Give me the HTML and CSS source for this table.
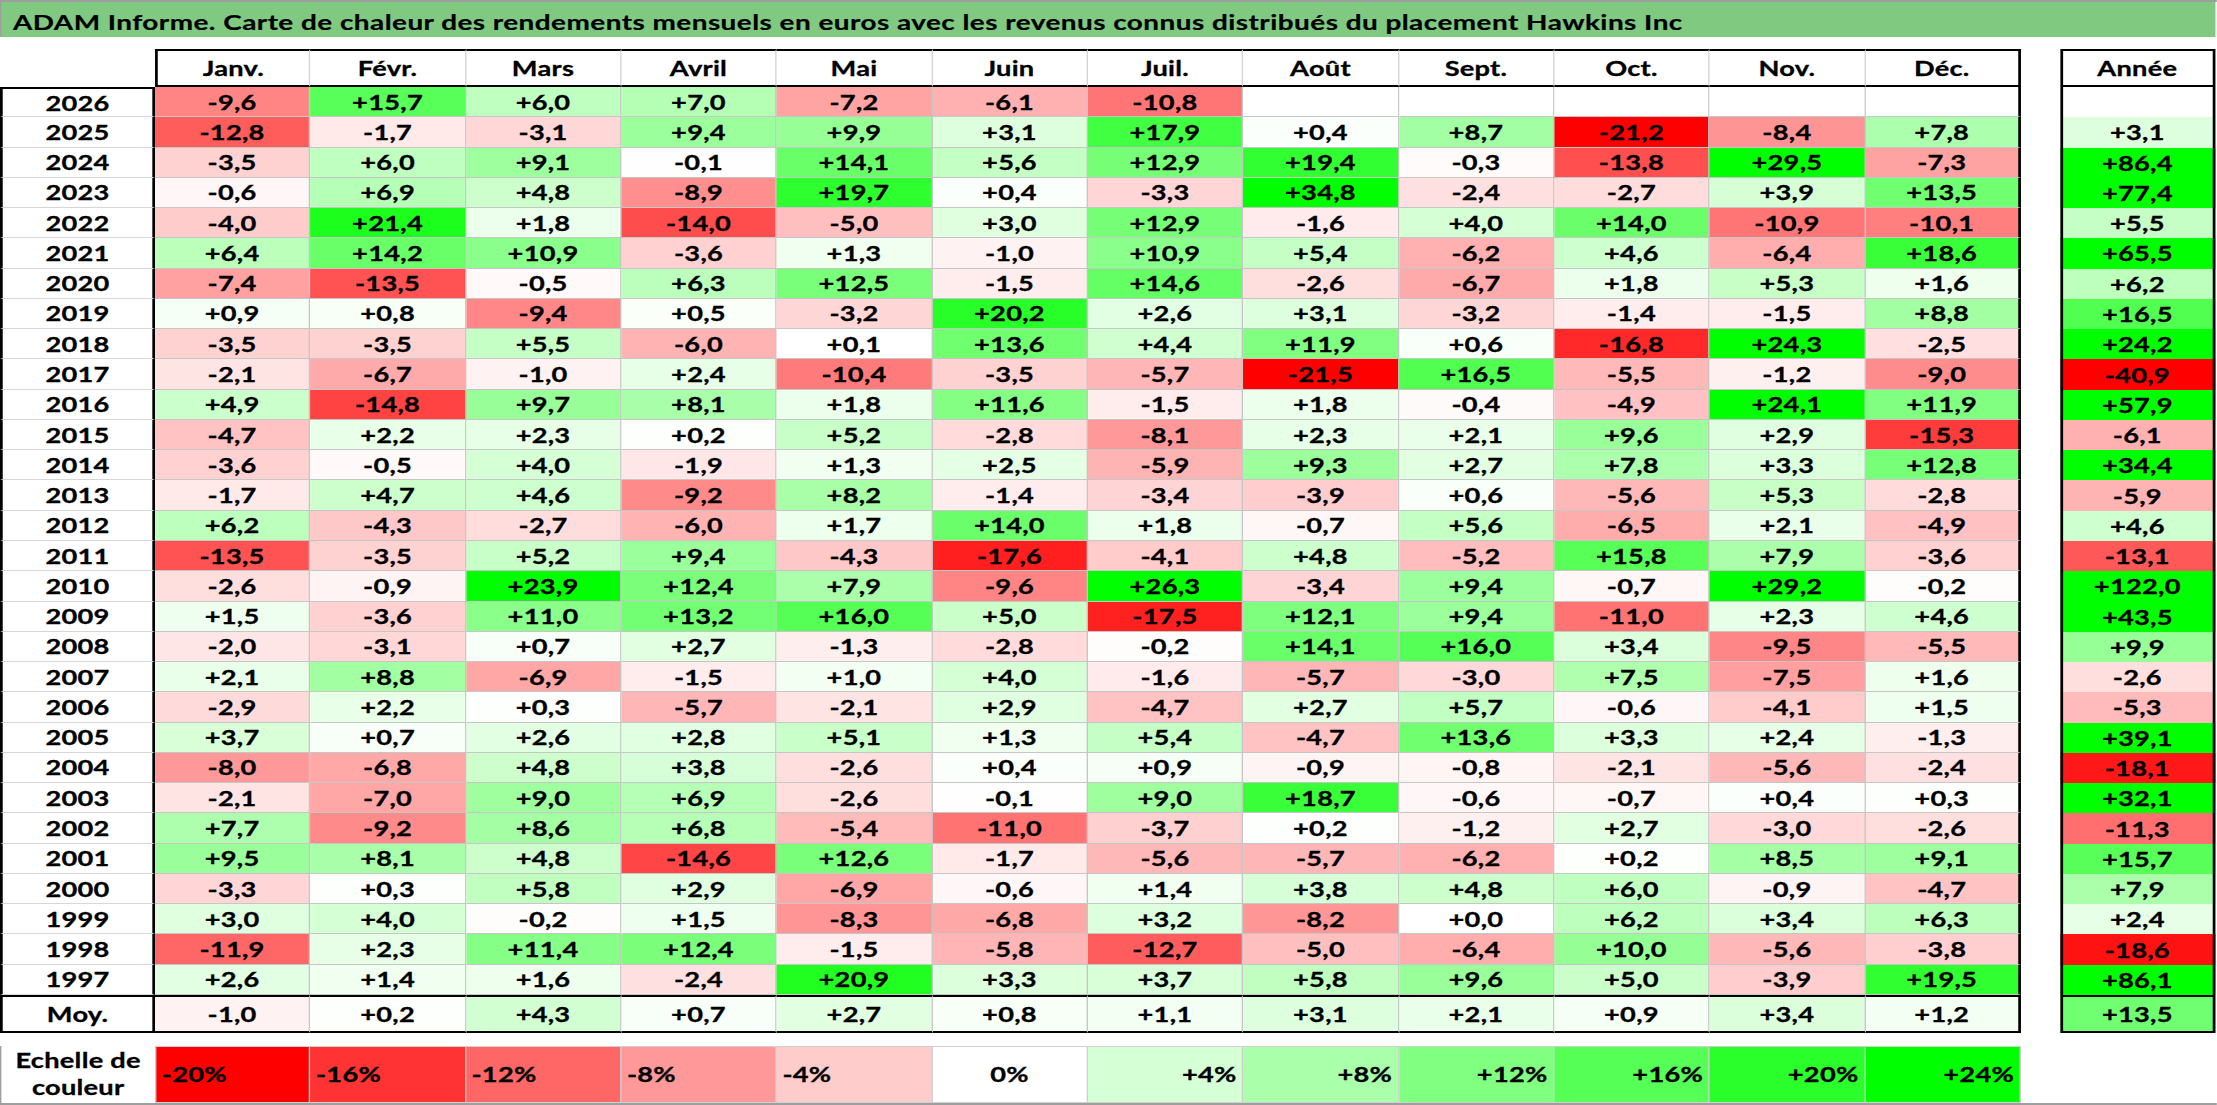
FILE: index.html
```html
<!DOCTYPE html>
<html lang="fr">
<head>
<meta charset="utf-8">
<title>ADAM Informe - Carte de chaleur Hawkins Inc</title>
<link rel="stylesheet" href="styles.css">
</head>
<body>
<div class="frame">
  <div class="title">ADAM Informe. Carte de chaleur des rendements mensuels en euros avec les revenus connus distribués du placement Hawkins Inc</div>
  <div class="board">
    <div class="grid">
      <div class="corner"></div>
      <div class="mh">Janv.</div><div class="mh">Févr.</div><div class="mh">Mars</div><div class="mh">Avril</div><div class="mh">Mai</div><div class="mh">Juin</div><div class="mh">Juil.</div><div class="mh">Août</div><div class="mh">Sept.</div><div class="mh">Oct.</div><div class="mh">Nov.</div><div class="mh">Déc.</div>

      <div class="yr first">2026</div><div class="c" style="--v:-9.6">-9,6</div><div class="c" style="--v:15.7">+15,7</div><div class="c" style="--v:6.0">+6,0</div><div class="c" style="--v:7.0">+7,0</div><div class="c" style="--v:-7.2">-7,2</div><div class="c" style="--v:-6.1">-6,1</div><div class="c" style="--v:-10.8">-10,8</div><div class="c e"></div><div class="c e"></div><div class="c e"></div><div class="c e"></div><div class="c e"></div>
      <div class="yr">2025</div><div class="c" style="--v:-12.8">-12,8</div><div class="c" style="--v:-1.7">-1,7</div><div class="c" style="--v:-3.1">-3,1</div><div class="c" style="--v:9.4">+9,4</div><div class="c" style="--v:9.9">+9,9</div><div class="c" style="--v:3.1">+3,1</div><div class="c" style="--v:17.9">+17,9</div><div class="c" style="--v:0.4">+0,4</div><div class="c" style="--v:8.7">+8,7</div><div class="c" style="--v:-21.2">-21,2</div><div class="c" style="--v:-8.4">-8,4</div><div class="c" style="--v:7.8">+7,8</div>
      <div class="yr">2024</div><div class="c" style="--v:-3.5">-3,5</div><div class="c" style="--v:6.0">+6,0</div><div class="c" style="--v:9.1">+9,1</div><div class="c" style="--v:-0.1">-0,1</div><div class="c" style="--v:14.1">+14,1</div><div class="c" style="--v:5.6">+5,6</div><div class="c" style="--v:12.9">+12,9</div><div class="c" style="--v:19.4">+19,4</div><div class="c" style="--v:-0.3">-0,3</div><div class="c" style="--v:-13.8">-13,8</div><div class="c" style="--v:29.5">+29,5</div><div class="c" style="--v:-7.3">-7,3</div>
      <div class="yr">2023</div><div class="c" style="--v:-0.6">-0,6</div><div class="c" style="--v:6.9">+6,9</div><div class="c" style="--v:4.8">+4,8</div><div class="c" style="--v:-8.9">-8,9</div><div class="c" style="--v:19.7">+19,7</div><div class="c" style="--v:0.4">+0,4</div><div class="c" style="--v:-3.3">-3,3</div><div class="c" style="--v:34.8">+34,8</div><div class="c" style="--v:-2.4">-2,4</div><div class="c" style="--v:-2.7">-2,7</div><div class="c" style="--v:3.9">+3,9</div><div class="c" style="--v:13.5">+13,5</div>
      <div class="yr">2022</div><div class="c" style="--v:-4.0">-4,0</div><div class="c" style="--v:21.4">+21,4</div><div class="c" style="--v:1.8">+1,8</div><div class="c" style="--v:-14.0">-14,0</div><div class="c" style="--v:-5.0">-5,0</div><div class="c" style="--v:3.0">+3,0</div><div class="c" style="--v:12.9">+12,9</div><div class="c" style="--v:-1.6">-1,6</div><div class="c" style="--v:4.0">+4,0</div><div class="c" style="--v:14.0">+14,0</div><div class="c" style="--v:-10.9">-10,9</div><div class="c" style="--v:-10.1">-10,1</div>
      <div class="yr">2021</div><div class="c" style="--v:6.4">+6,4</div><div class="c" style="--v:14.2">+14,2</div><div class="c" style="--v:10.9">+10,9</div><div class="c" style="--v:-3.6">-3,6</div><div class="c" style="--v:1.3">+1,3</div><div class="c" style="--v:-1.0">-1,0</div><div class="c" style="--v:10.9">+10,9</div><div class="c" style="--v:5.4">+5,4</div><div class="c" style="--v:-6.2">-6,2</div><div class="c" style="--v:4.6">+4,6</div><div class="c" style="--v:-6.4">-6,4</div><div class="c" style="--v:18.6">+18,6</div>
      <div class="yr">2020</div><div class="c" style="--v:-7.4">-7,4</div><div class="c" style="--v:-13.5">-13,5</div><div class="c" style="--v:-0.5">-0,5</div><div class="c" style="--v:6.3">+6,3</div><div class="c" style="--v:12.5">+12,5</div><div class="c" style="--v:-1.5">-1,5</div><div class="c" style="--v:14.6">+14,6</div><div class="c" style="--v:-2.6">-2,6</div><div class="c" style="--v:-6.7">-6,7</div><div class="c" style="--v:1.8">+1,8</div><div class="c" style="--v:5.3">+5,3</div><div class="c" style="--v:1.6">+1,6</div>
      <div class="yr">2019</div><div class="c" style="--v:0.9">+0,9</div><div class="c" style="--v:0.8">+0,8</div><div class="c" style="--v:-9.4">-9,4</div><div class="c" style="--v:0.5">+0,5</div><div class="c" style="--v:-3.2">-3,2</div><div class="c" style="--v:20.2">+20,2</div><div class="c" style="--v:2.6">+2,6</div><div class="c" style="--v:3.1">+3,1</div><div class="c" style="--v:-3.2">-3,2</div><div class="c" style="--v:-1.4">-1,4</div><div class="c" style="--v:-1.5">-1,5</div><div class="c" style="--v:8.8">+8,8</div>
      <div class="yr">2018</div><div class="c" style="--v:-3.5">-3,5</div><div class="c" style="--v:-3.5">-3,5</div><div class="c" style="--v:5.5">+5,5</div><div class="c" style="--v:-6.0">-6,0</div><div class="c" style="--v:0.1">+0,1</div><div class="c" style="--v:13.6">+13,6</div><div class="c" style="--v:4.4">+4,4</div><div class="c" style="--v:11.9">+11,9</div><div class="c" style="--v:0.6">+0,6</div><div class="c" style="--v:-16.8">-16,8</div><div class="c" style="--v:24.3">+24,3</div><div class="c" style="--v:-2.5">-2,5</div>
      <div class="yr">2017</div><div class="c" style="--v:-2.1">-2,1</div><div class="c" style="--v:-6.7">-6,7</div><div class="c" style="--v:-1.0">-1,0</div><div class="c" style="--v:2.4">+2,4</div><div class="c" style="--v:-10.4">-10,4</div><div class="c" style="--v:-3.5">-3,5</div><div class="c" style="--v:-5.7">-5,7</div><div class="c" style="--v:-21.5">-21,5</div><div class="c" style="--v:16.5">+16,5</div><div class="c" style="--v:-5.5">-5,5</div><div class="c" style="--v:-1.2">-1,2</div><div class="c" style="--v:-9.0">-9,0</div>
      <div class="yr">2016</div><div class="c" style="--v:4.9">+4,9</div><div class="c" style="--v:-14.8">-14,8</div><div class="c" style="--v:9.7">+9,7</div><div class="c" style="--v:8.1">+8,1</div><div class="c" style="--v:1.8">+1,8</div><div class="c" style="--v:11.6">+11,6</div><div class="c" style="--v:-1.5">-1,5</div><div class="c" style="--v:1.8">+1,8</div><div class="c" style="--v:-0.4">-0,4</div><div class="c" style="--v:-4.9">-4,9</div><div class="c" style="--v:24.1">+24,1</div><div class="c" style="--v:11.9">+11,9</div>
      <div class="yr">2015</div><div class="c" style="--v:-4.7">-4,7</div><div class="c" style="--v:2.2">+2,2</div><div class="c" style="--v:2.3">+2,3</div><div class="c" style="--v:0.2">+0,2</div><div class="c" style="--v:5.2">+5,2</div><div class="c" style="--v:-2.8">-2,8</div><div class="c" style="--v:-8.1">-8,1</div><div class="c" style="--v:2.3">+2,3</div><div class="c" style="--v:2.1">+2,1</div><div class="c" style="--v:9.6">+9,6</div><div class="c" style="--v:2.9">+2,9</div><div class="c" style="--v:-15.3">-15,3</div>
      <div class="yr">2014</div><div class="c" style="--v:-3.6">-3,6</div><div class="c" style="--v:-0.5">-0,5</div><div class="c" style="--v:4.0">+4,0</div><div class="c" style="--v:-1.9">-1,9</div><div class="c" style="--v:1.3">+1,3</div><div class="c" style="--v:2.5">+2,5</div><div class="c" style="--v:-5.9">-5,9</div><div class="c" style="--v:9.3">+9,3</div><div class="c" style="--v:2.7">+2,7</div><div class="c" style="--v:7.8">+7,8</div><div class="c" style="--v:3.3">+3,3</div><div class="c" style="--v:12.8">+12,8</div>
      <div class="yr">2013</div><div class="c" style="--v:-1.7">-1,7</div><div class="c" style="--v:4.7">+4,7</div><div class="c" style="--v:4.6">+4,6</div><div class="c" style="--v:-9.2">-9,2</div><div class="c" style="--v:8.2">+8,2</div><div class="c" style="--v:-1.4">-1,4</div><div class="c" style="--v:-3.4">-3,4</div><div class="c" style="--v:-3.9">-3,9</div><div class="c" style="--v:0.6">+0,6</div><div class="c" style="--v:-5.6">-5,6</div><div class="c" style="--v:5.3">+5,3</div><div class="c" style="--v:-2.8">-2,8</div>
      <div class="yr">2012</div><div class="c" style="--v:6.2">+6,2</div><div class="c" style="--v:-4.3">-4,3</div><div class="c" style="--v:-2.7">-2,7</div><div class="c" style="--v:-6.0">-6,0</div><div class="c" style="--v:1.7">+1,7</div><div class="c" style="--v:14.0">+14,0</div><div class="c" style="--v:1.8">+1,8</div><div class="c" style="--v:-0.7">-0,7</div><div class="c" style="--v:5.6">+5,6</div><div class="c" style="--v:-6.5">-6,5</div><div class="c" style="--v:2.1">+2,1</div><div class="c" style="--v:-4.9">-4,9</div>
      <div class="yr">2011</div><div class="c" style="--v:-13.5">-13,5</div><div class="c" style="--v:-3.5">-3,5</div><div class="c" style="--v:5.2">+5,2</div><div class="c" style="--v:9.4">+9,4</div><div class="c" style="--v:-4.3">-4,3</div><div class="c" style="--v:-17.6">-17,6</div><div class="c" style="--v:-4.1">-4,1</div><div class="c" style="--v:4.8">+4,8</div><div class="c" style="--v:-5.2">-5,2</div><div class="c" style="--v:15.8">+15,8</div><div class="c" style="--v:7.9">+7,9</div><div class="c" style="--v:-3.6">-3,6</div>
      <div class="yr">2010</div><div class="c" style="--v:-2.6">-2,6</div><div class="c" style="--v:-0.9">-0,9</div><div class="c" style="--v:23.9">+23,9</div><div class="c" style="--v:12.4">+12,4</div><div class="c" style="--v:7.9">+7,9</div><div class="c" style="--v:-9.6">-9,6</div><div class="c" style="--v:26.3">+26,3</div><div class="c" style="--v:-3.4">-3,4</div><div class="c" style="--v:9.4">+9,4</div><div class="c" style="--v:-0.7">-0,7</div><div class="c" style="--v:29.2">+29,2</div><div class="c" style="--v:-0.2">-0,2</div>
      <div class="yr">2009</div><div class="c" style="--v:1.5">+1,5</div><div class="c" style="--v:-3.6">-3,6</div><div class="c" style="--v:11.0">+11,0</div><div class="c" style="--v:13.2">+13,2</div><div class="c" style="--v:16.0">+16,0</div><div class="c" style="--v:5.0">+5,0</div><div class="c" style="--v:-17.5">-17,5</div><div class="c" style="--v:12.1">+12,1</div><div class="c" style="--v:9.4">+9,4</div><div class="c" style="--v:-11.0">-11,0</div><div class="c" style="--v:2.3">+2,3</div><div class="c" style="--v:4.6">+4,6</div>
      <div class="yr">2008</div><div class="c" style="--v:-2.0">-2,0</div><div class="c" style="--v:-3.1">-3,1</div><div class="c" style="--v:0.7">+0,7</div><div class="c" style="--v:2.7">+2,7</div><div class="c" style="--v:-1.3">-1,3</div><div class="c" style="--v:-2.8">-2,8</div><div class="c" style="--v:-0.2">-0,2</div><div class="c" style="--v:14.1">+14,1</div><div class="c" style="--v:16.0">+16,0</div><div class="c" style="--v:3.4">+3,4</div><div class="c" style="--v:-9.5">-9,5</div><div class="c" style="--v:-5.5">-5,5</div>
      <div class="yr">2007</div><div class="c" style="--v:2.1">+2,1</div><div class="c" style="--v:8.8">+8,8</div><div class="c" style="--v:-6.9">-6,9</div><div class="c" style="--v:-1.5">-1,5</div><div class="c" style="--v:1.0">+1,0</div><div class="c" style="--v:4.0">+4,0</div><div class="c" style="--v:-1.6">-1,6</div><div class="c" style="--v:-5.7">-5,7</div><div class="c" style="--v:-3.0">-3,0</div><div class="c" style="--v:7.5">+7,5</div><div class="c" style="--v:-7.5">-7,5</div><div class="c" style="--v:1.6">+1,6</div>
      <div class="yr">2006</div><div class="c" style="--v:-2.9">-2,9</div><div class="c" style="--v:2.2">+2,2</div><div class="c" style="--v:0.3">+0,3</div><div class="c" style="--v:-5.7">-5,7</div><div class="c" style="--v:-2.1">-2,1</div><div class="c" style="--v:2.9">+2,9</div><div class="c" style="--v:-4.7">-4,7</div><div class="c" style="--v:2.7">+2,7</div><div class="c" style="--v:5.7">+5,7</div><div class="c" style="--v:-0.6">-0,6</div><div class="c" style="--v:-4.1">-4,1</div><div class="c" style="--v:1.5">+1,5</div>
      <div class="yr">2005</div><div class="c" style="--v:3.7">+3,7</div><div class="c" style="--v:0.7">+0,7</div><div class="c" style="--v:2.6">+2,6</div><div class="c" style="--v:2.8">+2,8</div><div class="c" style="--v:5.1">+5,1</div><div class="c" style="--v:1.3">+1,3</div><div class="c" style="--v:5.4">+5,4</div><div class="c" style="--v:-4.7">-4,7</div><div class="c" style="--v:13.6">+13,6</div><div class="c" style="--v:3.3">+3,3</div><div class="c" style="--v:2.4">+2,4</div><div class="c" style="--v:-1.3">-1,3</div>
      <div class="yr">2004</div><div class="c" style="--v:-8.0">-8,0</div><div class="c" style="--v:-6.8">-6,8</div><div class="c" style="--v:4.8">+4,8</div><div class="c" style="--v:3.8">+3,8</div><div class="c" style="--v:-2.6">-2,6</div><div class="c" style="--v:0.4">+0,4</div><div class="c" style="--v:0.9">+0,9</div><div class="c" style="--v:-0.9">-0,9</div><div class="c" style="--v:-0.8">-0,8</div><div class="c" style="--v:-2.1">-2,1</div><div class="c" style="--v:-5.6">-5,6</div><div class="c" style="--v:-2.4">-2,4</div>
      <div class="yr">2003</div><div class="c" style="--v:-2.1">-2,1</div><div class="c" style="--v:-7.0">-7,0</div><div class="c" style="--v:9.0">+9,0</div><div class="c" style="--v:6.9">+6,9</div><div class="c" style="--v:-2.6">-2,6</div><div class="c" style="--v:-0.1">-0,1</div><div class="c" style="--v:9.0">+9,0</div><div class="c" style="--v:18.7">+18,7</div><div class="c" style="--v:-0.6">-0,6</div><div class="c" style="--v:-0.7">-0,7</div><div class="c" style="--v:0.4">+0,4</div><div class="c" style="--v:0.3">+0,3</div>
      <div class="yr">2002</div><div class="c" style="--v:7.7">+7,7</div><div class="c" style="--v:-9.2">-9,2</div><div class="c" style="--v:8.6">+8,6</div><div class="c" style="--v:6.8">+6,8</div><div class="c" style="--v:-5.4">-5,4</div><div class="c" style="--v:-11.0">-11,0</div><div class="c" style="--v:-3.7">-3,7</div><div class="c" style="--v:0.2">+0,2</div><div class="c" style="--v:-1.2">-1,2</div><div class="c" style="--v:2.7">+2,7</div><div class="c" style="--v:-3.0">-3,0</div><div class="c" style="--v:-2.6">-2,6</div>
      <div class="yr">2001</div><div class="c" style="--v:9.5">+9,5</div><div class="c" style="--v:8.1">+8,1</div><div class="c" style="--v:4.8">+4,8</div><div class="c" style="--v:-14.6">-14,6</div><div class="c" style="--v:12.6">+12,6</div><div class="c" style="--v:-1.7">-1,7</div><div class="c" style="--v:-5.6">-5,6</div><div class="c" style="--v:-5.7">-5,7</div><div class="c" style="--v:-6.2">-6,2</div><div class="c" style="--v:0.2">+0,2</div><div class="c" style="--v:8.5">+8,5</div><div class="c" style="--v:9.1">+9,1</div>
      <div class="yr">2000</div><div class="c" style="--v:-3.3">-3,3</div><div class="c" style="--v:0.3">+0,3</div><div class="c" style="--v:5.8">+5,8</div><div class="c" style="--v:2.9">+2,9</div><div class="c" style="--v:-6.9">-6,9</div><div class="c" style="--v:-0.6">-0,6</div><div class="c" style="--v:1.4">+1,4</div><div class="c" style="--v:3.8">+3,8</div><div class="c" style="--v:4.8">+4,8</div><div class="c" style="--v:6.0">+6,0</div><div class="c" style="--v:-0.9">-0,9</div><div class="c" style="--v:-4.7">-4,7</div>
      <div class="yr">1999</div><div class="c" style="--v:3.0">+3,0</div><div class="c" style="--v:4.0">+4,0</div><div class="c" style="--v:-0.2">-0,2</div><div class="c" style="--v:1.5">+1,5</div><div class="c" style="--v:-8.3">-8,3</div><div class="c" style="--v:-6.8">-6,8</div><div class="c" style="--v:3.2">+3,2</div><div class="c" style="--v:-8.2">-8,2</div><div class="c" style="--v:0">+0,0</div><div class="c" style="--v:6.2">+6,2</div><div class="c" style="--v:3.4">+3,4</div><div class="c" style="--v:6.3">+6,3</div>
      <div class="yr">1998</div><div class="c" style="--v:-11.9">-11,9</div><div class="c" style="--v:2.3">+2,3</div><div class="c" style="--v:11.4">+11,4</div><div class="c" style="--v:12.4">+12,4</div><div class="c" style="--v:-1.5">-1,5</div><div class="c" style="--v:-5.8">-5,8</div><div class="c" style="--v:-12.7">-12,7</div><div class="c" style="--v:-5.0">-5,0</div><div class="c" style="--v:-6.4">-6,4</div><div class="c" style="--v:10.0">+10,0</div><div class="c" style="--v:-5.6">-5,6</div><div class="c" style="--v:-3.8">-3,8</div>
      <div class="yr">1997</div><div class="c" style="--v:2.6">+2,6</div><div class="c" style="--v:1.4">+1,4</div><div class="c" style="--v:1.6">+1,6</div><div class="c" style="--v:-2.4">-2,4</div><div class="c" style="--v:20.9">+20,9</div><div class="c" style="--v:3.3">+3,3</div><div class="c" style="--v:3.7">+3,7</div><div class="c" style="--v:5.8">+5,8</div><div class="c" style="--v:9.6">+9,6</div><div class="c" style="--v:5.0">+5,0</div><div class="c" style="--v:-3.9">-3,9</div><div class="c" style="--v:19.5">+19,5</div>
      <div class="yr moy">Moy.</div><div class="c moy" style="--v:-1.0">-1,0</div><div class="c moy" style="--v:0.2">+0,2</div><div class="c moy" style="--v:4.3">+4,3</div><div class="c moy" style="--v:0.7">+0,7</div><div class="c moy" style="--v:2.7">+2,7</div><div class="c moy" style="--v:0.8">+0,8</div><div class="c moy" style="--v:1.1">+1,1</div><div class="c moy" style="--v:3.1">+3,1</div><div class="c moy" style="--v:2.1">+2,1</div><div class="c moy" style="--v:0.9">+0,9</div><div class="c moy" style="--v:3.4">+3,4</div><div class="c moy" style="--v:1.2">+1,2</div>
    </div>

    <div class="annee">
      <div class="ah">Année</div>
      <div class="ac e"></div>
      <div class="ac" style="--v:3.1">+3,1</div>
      <div class="ac" style="--v:86.4">+86,4</div>
      <div class="ac" style="--v:77.4">+77,4</div>
      <div class="ac" style="--v:5.5">+5,5</div>
      <div class="ac" style="--v:65.5">+65,5</div>
      <div class="ac" style="--v:6.2">+6,2</div>
      <div class="ac" style="--v:16.5">+16,5</div>
      <div class="ac" style="--v:24.2">+24,2</div>
      <div class="ac" style="--v:-40.9">-40,9</div>
      <div class="ac" style="--v:57.9">+57,9</div>
      <div class="ac" style="--v:-6.1">-6,1</div>
      <div class="ac" style="--v:34.4">+34,4</div>
      <div class="ac" style="--v:-5.9">-5,9</div>
      <div class="ac" style="--v:4.6">+4,6</div>
      <div class="ac" style="--v:-13.1">-13,1</div>
      <div class="ac" style="--v:122.0">+122,0</div>
      <div class="ac" style="--v:43.5">+43,5</div>
      <div class="ac" style="--v:9.9">+9,9</div>
      <div class="ac" style="--v:-2.6">-2,6</div>
      <div class="ac" style="--v:-5.3">-5,3</div>
      <div class="ac" style="--v:39.1">+39,1</div>
      <div class="ac" style="--v:-18.1">-18,1</div>
      <div class="ac" style="--v:32.1">+32,1</div>
      <div class="ac" style="--v:-11.3">-11,3</div>
      <div class="ac" style="--v:15.7">+15,7</div>
      <div class="ac" style="--v:7.9">+7,9</div>
      <div class="ac" style="--v:2.4">+2,4</div>
      <div class="ac" style="--v:-18.6">-18,6</div>
      <div class="ac" style="--v:86.1">+86,1</div>
      <div class="ac moy" style="--v:13.5">+13,5</div>
    </div>
  </div>

  <div class="legend">
    <div class="lt">Echelle de<br>couleur</div>
    <div class="lc neg" style="--v:-20">-20%</div>
    <div class="lc neg" style="--v:-16">-16%</div>
    <div class="lc neg" style="--v:-12">-12%</div>
    <div class="lc neg" style="--v:-8">-8%</div>
    <div class="lc neg" style="--v:-4">-4%</div>
    <div class="lc zero" style="--v:0">0%</div>
    <div class="lc pos" style="--v:4">+4%</div>
    <div class="lc pos" style="--v:8">+8%</div>
    <div class="lc pos" style="--v:12">+12%</div>
    <div class="lc pos" style="--v:16">+16%</div>
    <div class="lc pos" style="--v:20">+20%</div>
    <div class="lc pos" style="--v:24">+24%</div>
  </div>
</div>
</body>
</html>
```

FILE: styles.css
```css
html, body {
  margin: 0;
  padding: 0;
  background: #ffffff;
}

body {
  width: 2217px;
  height: 1105px;
  overflow: hidden;
  font-family: Lato, "Open Sans", "Liberation Sans", sans-serif;
  font-weight: 700;
  color: #000000;
}

/* The original export is stretched horizontally; the whole sheet is drawn narrow and widened. */
.frame {
  width: 1630.1px;
  height: 1105px;
  box-sizing: border-box;
  border-top: 2px solid #9e9e9e;
  border-bottom: 2px solid #9e9e9e;
  display: flex;
  flex-direction: column;
  transform: scaleX(1.36);
  transform-origin: 0 0;
}

.title {
  width: 1628.7px;
  height: 35px;
  flex: none;
  box-sizing: border-box;
  padding: 4px 0 0 8.5px;
  background: #80c980;
  border-left: 1px solid #9e9e9e;
  font-size: 20.5px;
  letter-spacing: 0.35px;
  -webkit-text-stroke: 0.2px #000;
  display: flex;
  align-items: center;
  white-space: nowrap;
}

.board {
  display: flex;
  flex: none;
  gap: 28.68px;
  margin-top: 12px;
  font-size: 20px;
  letter-spacing: 0.2px;
  -webkit-text-stroke: 0.3px #000;
}

.grid {
  display: grid;
  grid-template-columns: 113.97px repeat(12, 114.34px);
  grid-template-rows: 38px repeat(30, 30.267px) 38px;
}

.annee {
  display: grid;
  grid-template-columns: 113.97px;
  grid-template-rows: 38px repeat(30, 30.267px) 38px;
}

.grid > div,
.annee > div,
.legend > div {
  box-sizing: border-box;
  display: flex;
  align-items: center;
  justify-content: center;
  white-space: nowrap;
}

/* heat colour: red below zero (full at -20), green above (full at +24) */
.c, .ac, .lc {
  background: rgb(
    calc(255 * (1 - clamp(0, var(--v) / 24, 1)))
    calc(255 * (1 - clamp(0, var(--v) / -20, 1)))
    calc(255 * (1 - clamp(0, var(--v) / 24, 1) - clamp(0, var(--v) / -20, 1)))
  );
}

.c.e, .ac.e {
  background: #ffffff;
}

.corner {
  background: #ffffff;
}

.mh {
  border-top: 2px solid #000;
  border-bottom: 2px solid #000;
  border-right: 1px solid #d4d4d4;
}

.mh:nth-child(2) {
  border-left: 2px solid #000;
}

.yr {
  border-left: 2px solid #000;
  border-right: 2px solid #000;
  border-bottom: 1px solid #d6d6d6;
}

.yr.first {
  border-top: 2px solid #000;
}

.c {
  border-right: 1.5px solid #c6c6c6;
  border-bottom: 1px solid #c6c6c6;
}

.grid > :nth-child(13n) {
  border-right: 2px solid #000;
}

.moy {
  border-top: 2px solid #000;
  border-bottom: 2px solid #000;
}

.ah {
  border: 2px solid #000;
}

.ac {
  border-left: 2px solid #000;
  border-right: 2px solid #000;
}

.legend {
  display: grid;
  flex: none;
  grid-template-columns: 113.97px repeat(12, 114.34px);
  height: 57px;
  margin-top: 13px;
  font-size: 20px;
  letter-spacing: 0.2px;
  -webkit-text-stroke: 0.3px #000;
}

.lt {
  border-left: 1px solid #9e9e9e;
  line-height: 27px;
  text-align: center;
  flex-direction: column;
}

.lc {
  border-top: 1px solid #d0d0d0;
  border-bottom: 1px solid #d0d0d0;
  border-right: 1px solid #d0d0d0;
}

.lc:nth-child(2) {
  border-left: 1px solid #d0d0d0;
}

.legend > .neg {
  justify-content: flex-start;
  padding-left: 4px;
}

.legend > .pos {
  justify-content: flex-end;
  padding-right: 4px;
}
```
